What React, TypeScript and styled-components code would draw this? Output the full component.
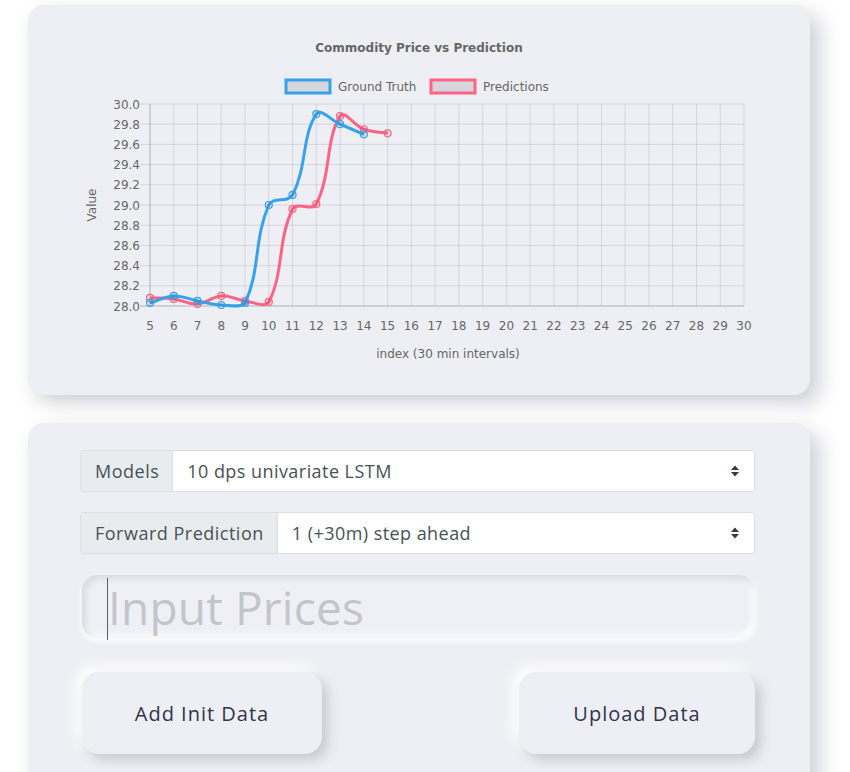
import React from "react";
import styled, { createGlobalStyle } from "styled-components";

const Global = createGlobalStyle`
  html, body { margin: 0; padding: 0; background: #ffffff; }
  body { font-family: "Open Sans", "Liberation Sans", sans-serif; overflow: hidden; }
`;

const Page = styled.div`
  width: 850px;
  height: 772px;
  padding: 5px 0 0 28px;
  box-sizing: border-box;
  display: flex;
  flex-direction: column;
  gap: 28px;
  overflow: hidden;
`;

const Card = styled.section<{ $h?: number }>`
  width: 782px;
  height: ${(p) => (p.$h ? `${p.$h}px` : "auto")};
  flex: none;
  background: #eeeff4;
  border-radius: 16px;
  box-shadow: 9px 9px 22px #cdced4, -9px -9px 22px #ffffff;
  box-sizing: border-box;
`;

const FormCard = styled(Card)`
  padding: 27px 55px 40px 52px;
  display: flex;
  flex-direction: column;
`;

const ChartSvg = styled.svg`
  display: block;
  font-family: "DejaVu Sans", "Liberation Sans", sans-serif;
`;

const InputGroup = styled.div<{ $mt?: number }>`
  display: flex;
  height: 42px;
  margin-top: ${(p) => p.$mt ?? 0}px;
  border: 1px solid #dcdfe4;
  border-radius: 4px;
  overflow: hidden;
  box-sizing: border-box;
`;

const GroupLabel = styled.div`
  display: flex;
  align-items: center;
  padding: 0 13px 0 14px;
  background: #e9ecef;
  border-right: 1px solid #dcdfe4;
  color: #495057;
  font-size: 18px;
  letter-spacing: 0.5px;
  white-space: nowrap;
`;

const SelectBox = styled.div`
  flex: 1;
  display: flex;
  align-items: center;
  justify-content: space-between;
  background: #ffffff;
  padding: 0 14px 0 14px;
  color: #495057;
  font-size: 18px;
  letter-spacing: 0.45px;
`;

const PriceField = styled.div`
  position: relative;
  margin-top: 21px;
  margin-left: 2px;
  height: 63px;
  border-radius: 16px;
  background: #eff0f5;
  box-shadow: inset 3px 3px 7px #d6d8de, inset -3px -3px 7px #ffffff, 0 3px 6px #ffffff;
  display: flex;
  align-items: center;
  padding-left: 26px;
  color: #c4c5cb;
  font-size: 46px;
  letter-spacing: 0.2px;
  &::before {
    content: "";
    position: absolute;
    left: 25px;
    top: 3px;
    bottom: -2px;
    width: 1px;
    background: #5b5b78;
  }
`;

const ButtonRow = styled.div`
  display: flex;
  justify-content: space-between;
  margin-top: 34px;
  padding-left: 2px;
`;

const SoftButton = styled.button<{ $w: number }>`
  width: ${(p) => p.$w}px;
  height: 82px;
  border: none;
  border-radius: 17px;
  background: #eeeff5;
  box-shadow: 6px 6px 12px #c9cad1, -6px -6px 14px #ffffff;
  color: #31344b;
  font-family: "Open Sans", "Liberation Sans", sans-serif;
  font-size: 20px;
  letter-spacing: 1px;
  cursor: pointer;
`;

const SortIcon = () => (
  <svg width="10" height="12" viewBox="0 0 10 12">
    <path d="M1 5 L5 0.5 L9 5 Z" fill="#343a40" />
    <path d="M1 7 L5 11.5 L9 7 Z" fill="#343a40" />
  </svg>
);

const blue = [28.03, 28.1, 28.05, 28.01, 28.03, 29.0, 29.1, 29.9, 29.8, 29.7];
const red = [28.08, 28.07, 28.02, 28.1, 28.05, 28.04, 28.96, 29.01, 29.88, 29.75, 29.71];

const X0 = 150;
const X1 = 744;
const Y0 = 306;
const Y1 = 104;
const xs = (i: number) => X0 + (i * (X1 - X0)) / 25;
const ys = (v: number) => Y0 - ((v - 28) * (Y0 - Y1)) / 2;

type P = { x: number; y: number };

function splinePath(vals: number[]): string {
  const pts: P[] = vals.map((v, i) => ({ x: xs(i), y: ys(v) }));
  const t = 0.4;
  const ctrl = pts.map((c, i) => {
    const p = pts[i - 1] || c;
    const n = pts[i + 1] || c;
    const d01 = Math.hypot(c.x - p.x, c.y - p.y);
    const d12 = Math.hypot(n.x - c.x, n.y - c.y);
    let s01 = d01 / (d01 + d12);
    let s12 = d12 / (d01 + d12);
    if (isNaN(s01)) s01 = 0;
    if (isNaN(s12)) s12 = 0;
    const fa = t * s01;
    const fb = t * s12;
    const cap = (q: P) => ({ x: q.x, y: Math.max(Y1, Math.min(Y0 + 2, q.y)) });
    return {
      prev: cap({ x: c.x - fa * (n.x - p.x), y: c.y - fa * (n.y - p.y) }),
      next: cap({ x: c.x + fb * (n.x - p.x), y: c.y + fb * (n.y - p.y) }),
    };
  });
  let d = `M${pts[0].x},${pts[0].y}`;
  for (let i = 1; i < pts.length; i++) {
    const a = ctrl[i - 1].next;
    const b = ctrl[i].prev;
    d += ` C${a.x},${a.y} ${b.x},${b.y} ${pts[i].x},${pts[i].y}`;
  }
  return d;
}

const Series = ({ vals, color }: { vals: number[]; color: string }) => (
  <g>
    <path d={splinePath(vals)} fill="none" stroke={color} strokeWidth={3} />
    {vals.map((v, i) => (
      <circle key={i} cx={xs(i)} cy={ys(v)} r={3.5} fill="rgba(0,0,0,0.06)" stroke={color} strokeWidth={1.2} />
    ))}
  </g>
);

const Chart = () => {
  const yTicks = Array.from({ length: 11 }, (_, i) => 28 + i * 0.2);
  const xTicks = Array.from({ length: 26 }, (_, i) => i);
  return (
    <ChartSvg width={782} height={390} viewBox="28 5 782 390">
      <text x={419} y={52} textAnchor="middle" fontSize={12} fontWeight="bold" fill="#666">
        Commodity Price vs Prediction
      </text>
      <rect x={286} y={80} width={44} height={13} fill="#d6d7dc" stroke="#36a2eb" strokeWidth={3} />
      <text x={338} y={90.5} fontSize={12} fill="#666">Ground Truth</text>
      <rect x={431} y={80} width={44} height={13} fill="#d6d7dc" stroke="#ff6384" strokeWidth={3} />
      <text x={483} y={90.5} fontSize={12} fill="#666">Predictions</text>

      {yTicks.map((v, i) => (
        <g key={`y${i}`}>
          <line x1={140} x2={X1} y1={ys(v)} y2={ys(v)} stroke={i === 0 ? "rgba(0,0,0,0.25)" : "rgba(0,0,0,0.1)"} strokeWidth={1} />
          <text x={140} y={ys(v) + 4.5} textAnchor="end" fontSize={12} fill="#666">{v.toFixed(1)}</text>
        </g>
      ))}
      {xTicks.map((i) => (
        <g key={`x${i}`}>
          <line x1={xs(i)} x2={xs(i)} y1={Y1} y2={Y0} stroke={i === 0 ? "rgba(0,0,0,0.25)" : "rgba(0,0,0,0.1)"} strokeWidth={1} />
          <text x={xs(i)} y={330} textAnchor="middle" fontSize={12} fill="#666">{i + 5}</text>
        </g>
      ))}
      <text x={448} y={358} textAnchor="middle" fontSize={12} fill="#666">index (30 min intervals)</text>
      <text x={0} y={0} transform="translate(96 205) rotate(-90)" textAnchor="middle" fontSize={12} fill="#666">Value</text>

      <Series vals={red} color="#ff6384" />
      <Series vals={blue} color="#36a2eb" />
    </ChartSvg>
  );
};

export default function App() {
  return (
    <>
      <Global />
      <Page>
        <Card $h={390}>
          <Chart />
        </Card>
        <FormCard>
          <InputGroup>
            <GroupLabel>Models</GroupLabel>
            <SelectBox>
              <span>10 dps univariate LSTM</span>
              <SortIcon />
            </SelectBox>
          </InputGroup>
          <InputGroup $mt={20}>
            <GroupLabel>Forward Prediction</GroupLabel>
            <SelectBox>
              <span>1 (+30m) step ahead</span>
              <SortIcon />
            </SelectBox>
          </InputGroup>
          <PriceField>Input Prices</PriceField>
          <ButtonRow>
            <SoftButton $w={240}>Add Init Data</SoftButton>
            <SoftButton $w={236}>Upload Data</SoftButton>
          </ButtonRow>
        </FormCard>
      </Page>
    </>
  );
}
